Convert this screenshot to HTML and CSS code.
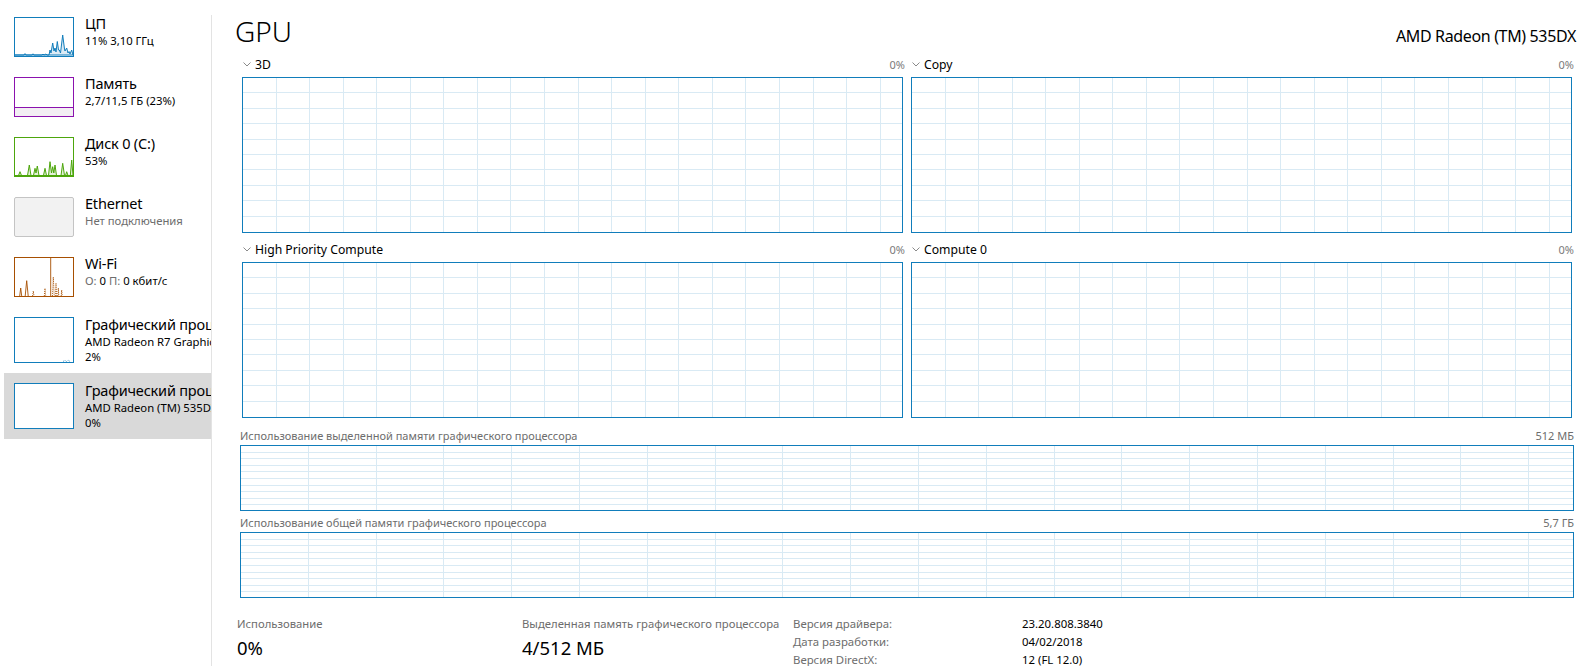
FILE: index.html
```html
<!DOCTYPE html>
<html lang="ru">
<head>
<meta charset="utf-8">
<title>Диспетчер задач — GPU</title>
<link rel="stylesheet" href="styles.css">
</head>
<body>
<div class="app">
  <nav class="sidebar">
    <div class="item">
      <svg class="thumb" width="60" height="40" viewBox="0 0 60 40">
        <rect x="0.5" y="0.5" width="59" height="39" fill="#fff" stroke="#117dbb"/>
        <path d="M1 38 L10 38 L11 36.6 L12 38 L18 38 L19 36.8 L20 38 L28 38 L29 37 L30 38 L32 37 L33 38 L35 38 L36 33 L37 36 L38.7 26 L40 34 L41 31 L42 35 L43.3 24.5 L44.5 33 L45.3 33 L46.5 36 L48.7 18 L50.5 32 L51 34 L52.7 31 L54 36 L55 34.5 L56 37 L57.7 33 L59 38 Z" fill="#dcebf5" stroke="#117dbb" stroke-width="1" stroke-linejoin="round"/>
      </svg>
      <div class="info">
        <div class="name">ЦП</div>
        <div class="sub">11% 3,10 ГГц</div>
      </div>
    </div>
    <div class="item">
      <svg class="thumb" width="60" height="40" viewBox="0 0 60 40">
        <rect x="0.5" y="0.5" width="59" height="39" fill="#fff" stroke="#8b12ae"/>
        <rect x="1" y="30.5" width="58" height="8.5" fill="#f2eef3"/>
        <line x1="1" y1="30.5" x2="59" y2="30.5" stroke="#8b12ae" stroke-width="1"/>
      </svg>
      <div class="info">
        <div class="name">Память</div>
        <div class="sub">2,7/11,5 ГБ (23%)</div>
      </div>
    </div>
    <div class="item">
      <svg class="thumb" width="60" height="40" viewBox="0 0 60 40">
        <rect x="0.5" y="0.5" width="59" height="39" fill="#fff" stroke="#4da60c"/>
        <path d="M1 38.5 L4.5 38.5 L6 34.7 L7.5 38.5 L13.5 38.5 L15.3 28 L17 38.5 L19.5 38.5 L21 31.3 L22 36 L23.3 29 L25 38.5 L29.5 38.5 L31 31.3 L32.5 38.5 L34.5 38.5 L36 24.7 L37.5 36 L38.7 29.7 L39.8 36 L41 28 L42.5 38.5 L47 38.5 L48.7 26.3 L50.5 38.5 L51.5 38.5 L52.7 34.7 L54 38.5 L56.3 38.5 L57.7 23 L59 38.5 Z" fill="#e3f0d8" stroke="#4da60c" stroke-width="1" stroke-linejoin="round"/>
      </svg>
      <div class="info">
        <div class="name">Диск 0 (C:)</div>
        <div class="sub">53%</div>
      </div>
    </div>
    <div class="item">
      <svg class="thumb" width="60" height="40" viewBox="0 0 60 40">
        <rect x="0.5" y="0.5" width="59" height="39" rx="1.5" fill="#f2f2f2" stroke="#c4c4c4"/>
      </svg>
      <div class="info">
        <div class="name">Ethernet</div>
        <div class="sub muted">Нет подключения</div>
      </div>
    </div>
    <div class="item">
      <svg class="thumb" width="60" height="40" viewBox="0 0 60 40">
        <rect x="0.5" y="0.5" width="59" height="39" fill="#fff" stroke="#a74f01"/>
        <g fill="none" stroke="#a74f01" stroke-width="0.9">
          <path d="M5.7 39 L6.7 31 L7.7 39"/>
          <path d="M11.2 39 L12.7 23.7 L14.2 39"/>
          <path d="M18.6 39 L19.3 34 L20 39" stroke-dasharray="1 1"/>
          <path d="M30.3 39 L31 31.3 L31.7 39" stroke-dasharray="1 1"/>
          <path d="M36.7 39 L36.7 1"/>
          <path d="M38.4 39 L39.3 20 L40.2 39" stroke-dasharray="1 1.1"/>
          <path d="M41.3 39 L42 26 L42.7 39" stroke-dasharray="1 1.1"/>
          <path d="M43.8 39 L44.3 31 L44.8 39" stroke-dasharray="1 1"/>
          <path d="M47.2 39 L47.7 33 L48.2 39" stroke-dasharray="1 1"/>
        </g>
      </svg>
      <div class="info">
        <div class="name">Wi-Fi</div>
        <div class="sub"><span class="muted">О:</span> 0 <span class="muted">П:</span> 0 кбит/с</div>
      </div>
    </div>
    <div class="item tall">
      <svg class="thumb" width="60" height="46" viewBox="0 0 60 46">
        <rect x="0.5" y="0.5" width="59" height="45" fill="#fff" stroke="#117dbb"/>
        <path d="M49 44.5 L51 43.3 L52.5 44.5 L54 43 L56 44.5" fill="none" stroke="#117dbb" stroke-width="0.8" stroke-dasharray="1 1"/>
      </svg>
      <div class="info">
        <div class="name">Графический процессор 0</div>
        <div class="sub">AMD Radeon R7 Graphics</div>
        <div class="sub">2%</div>
      </div>
    </div>
    <div class="item tall selected">
      <svg class="thumb" width="60" height="46" viewBox="0 0 60 46">
        <rect x="0.5" y="0.5" width="59" height="45" fill="#fff" stroke="#117dbb"/>
      </svg>
      <div class="info">
        <div class="name">Графический процессор 1</div>
        <div class="sub">AMD Radeon (TM) 535DX</div>
        <div class="sub">0%</div>
      </div>
    </div>
  </nav>
  <div class="divider"></div>
  <main class="main">
    <header class="head">
      <h1>GPU</h1>
      <div class="model">AMD Radeon (TM) 535DX</div>
    </header>
    <section class="engines">
      <div class="engine">
        <div class="engine-head">
          <svg class="chev" width="8" height="5" viewBox="0 0 8 5"><polyline points="0.5,0.5 4,4 7.5,0.5" fill="none" stroke="#8a8a8a" stroke-width="1"/></svg>
          <span class="engine-name">3D</span>
          <span class="pct">0%</span>
        </div>
        <div class="graph"></div>
      </div>
      <div class="engine">
        <div class="engine-head">
          <svg class="chev" width="8" height="5" viewBox="0 0 8 5"><polyline points="0.5,0.5 4,4 7.5,0.5" fill="none" stroke="#8a8a8a" stroke-width="1"/></svg>
          <span class="engine-name">Copy</span>
          <span class="pct">0%</span>
        </div>
        <div class="graph"></div>
      </div>
      <div class="engine">
        <div class="engine-head">
          <svg class="chev" width="8" height="5" viewBox="0 0 8 5"><polyline points="0.5,0.5 4,4 7.5,0.5" fill="none" stroke="#8a8a8a" stroke-width="1"/></svg>
          <span class="engine-name">High Priority Compute</span>
          <span class="pct">0%</span>
        </div>
        <div class="graph"></div>
      </div>
      <div class="engine">
        <div class="engine-head">
          <svg class="chev" width="8" height="5" viewBox="0 0 8 5"><polyline points="0.5,0.5 4,4 7.5,0.5" fill="none" stroke="#8a8a8a" stroke-width="1"/></svg>
          <span class="engine-name">Compute 0</span>
          <span class="pct">0%</span>
        </div>
        <div class="graph"></div>
      </div>
    </section>
    <section class="memory">
      <div class="mem-head">
        <span>Использование выделенной памяти графического процессора</span>
        <span>512 МБ</span>
      </div>
      <div class="mem-graph"></div>
      <div class="mem-head second">
        <span>Использование общей памяти графического процессора</span>
        <span>5,7 ГБ</span>
      </div>
      <div class="mem-graph"></div>
    </section>
    <section class="stats">
      <div class="stat">
        <div class="stat-label">Использование</div>
        <div class="stat-value">0%</div>
      </div>
      <div class="stat">
        <div class="stat-label">Выделенная память графического процессора</div>
        <div class="stat-value">4/512 МБ</div>
      </div>
      <dl class="props">
        <dt>Версия драйвера:</dt><dd>23.20.808.3840</dd>
        <dt>Дата разработки:</dt><dd>04/02/2018</dd>
        <dt>Версия DirectX:</dt><dd>12 (FL 12.0)</dd>
      </dl>
    </section>
  </main>
</div>
</body>
</html>
```

FILE: styles.css
```css
* { box-sizing: border-box; }
html, body { margin: 0; padding: 0; }
body {
  background: #fff;
  color: #000;
  font-family: "Noto Sans", "Open Sans", "DejaVu Sans", sans-serif;
  width: 1589px;
  height: 666px;
  overflow: hidden;
}
.app { display: flex; height: 666px; }

/* sidebar */
.sidebar {
  width: 211px;
  flex: none;
  padding: 7px 0 0 4px;
  overflow: hidden;
}
.item {
  display: flex;
  align-items: flex-start;
  gap: 11px;
  height: 60px;
  padding: 10px 0 0 10px;
  white-space: nowrap;
  overflow: hidden;
}
.item.tall { height: 66px; }
.item.tall .info { margin-top: -2px; }
.item.tall .sub { line-height: 15px; }
.item.selected { background: #d9d9d9; }
.thumb { flex: none; display: block; }
.info { margin-top: -3px; min-width: 0; }
.name { font-size: 14.5px; line-height: 19px; letter-spacing: -0.2px; }
.sub { font-size: 11.3px; line-height: 16px; }
.muted { color: #6d6d6d; }
.divider {
  flex: none;
  width: 1px;
  margin-top: 15px;
  background: #e3e3e3;
}

/* main */
.main {
  flex: 1;
  min-width: 0;
  padding: 0 13px 0 23px;
}
.head {
  display: flex;
  justify-content: space-between;
  align-items: baseline;
  height: 52px;
  padding-top: 13px;
}
.head h1 {
  margin: 0;
  font-size: 28px;
  font-weight: 300;
  line-height: 36px;
}
.model { font-size: 16px; letter-spacing: -0.35px; }

.engines {
  display: grid;
  grid-template-columns: 1fr 1fr;
  column-gap: 8px;
  row-gap: 4px;
  margin: 0 4px 0 7px;
}
.engine-head {
  display: flex;
  align-items: center;
  height: 25px;
  margin-right: -2px;
}
.chev { flex: none; margin: 0 4px 0 1px; }
.engine-name { flex: 1; font-size: 12.2px; }
.pct { font-size: 11px; color: #7a7a7a; }
.graph {
  height: 156px;
  border: 1px solid #117dbb;
  background-image:
    repeating-linear-gradient(to right, transparent 0 32.56px, #d9eaf4 32.56px 33.56px),
    repeating-linear-gradient(to bottom, transparent 0 14.4px, #d9eaf4 14.4px 15.4px);
  background-size: 100% 100%, 100% 150px;
  background-repeat: no-repeat;
}

.memory { margin: 9px 2px 0 5px; }
.mem-head {
  display: flex;
  justify-content: space-between;
  font-size: 11px;
  line-height: 18px;
  color: #6d6d6d;
}
.mem-head.second { margin-top: 3px; }
.mem-graph {
  height: 66px;
  border: 1px solid #117dbb;
  background-image:
    repeating-linear-gradient(to right, transparent 0 66.8px, #d9eaf4 66.8px 67.8px),
    repeating-linear-gradient(to bottom, transparent 0 5.6px, #d9eaf4 5.6px 6.6px);
  background-size: 100% 100%, 100% 60px;
  background-repeat: no-repeat;
}

.stats {
  display: grid;
  grid-template-columns: 285px 271px auto;
  margin: 17px 0 0 2px;
}
.stat-label {
  font-size: 11.3px;
  line-height: 18px;
  color: #6d6d6d;
  white-space: nowrap;
}
.stat-value {
  font-size: 18.5px;
  line-height: 30px;
}
.props {
  display: grid;
  grid-template-columns: 229px auto;
  margin: 0;
  font-size: 11.4px;
  line-height: 18.2px;
}
.props dt { color: #6d6d6d; }
.props dd { margin: 0; }
```
